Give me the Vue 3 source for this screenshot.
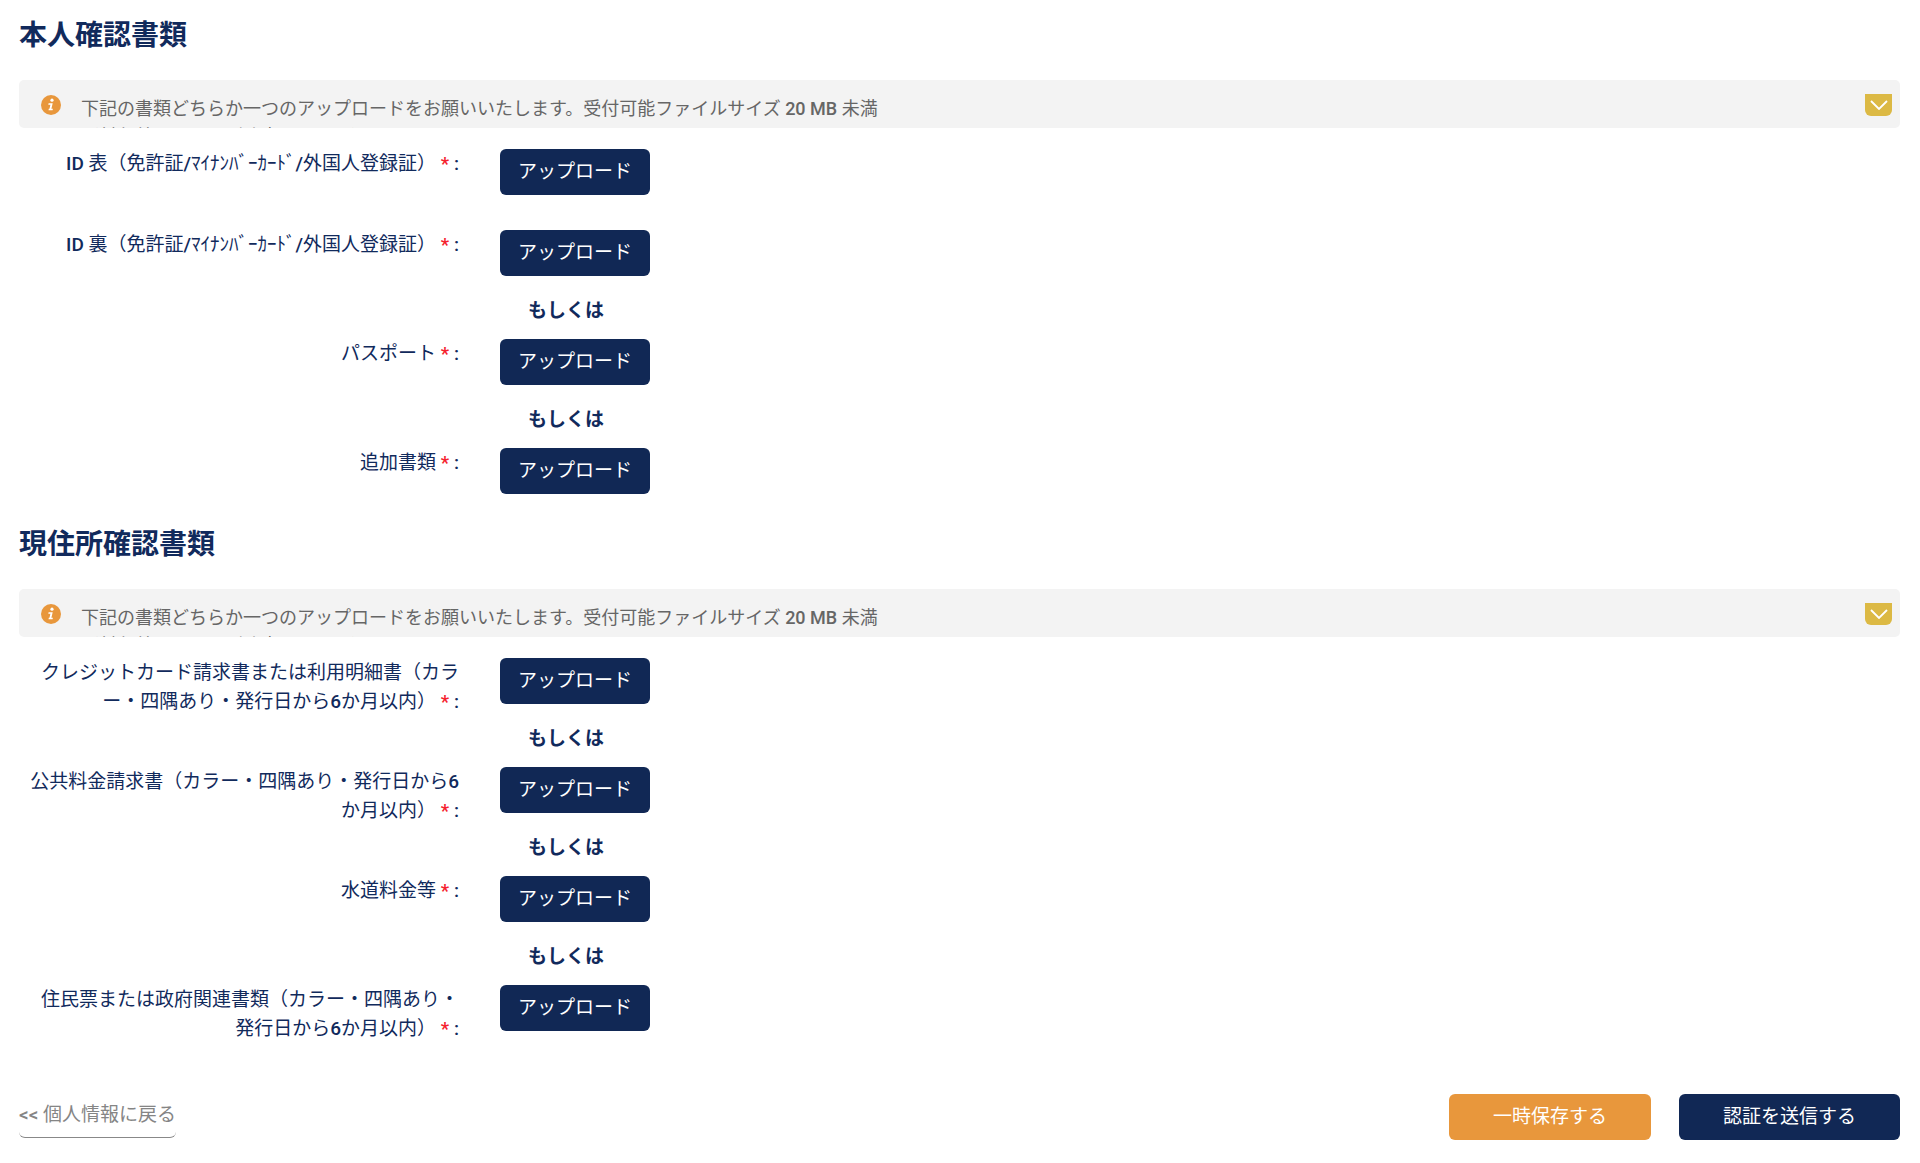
<script setup>
import { ref } from 'vue'

const notice = [
  '下記の書類どちらか一つのアップロードをお願いいたします。受付可能ファイルサイズ 20 MB 未満',
  '（対象外のものはご遠慮ください）'
]

const sections = ref([
  {
    id: 'identity',
    title: '本人確認書類',
    open: false,
    items: [
      { id: 'id-front', label: 'ID 表（免許証/ﾏｲﾅﾝﾊﾞｰｶｰﾄﾞ/外国人登録証）', or: false },
      { id: 'id-back', label: 'ID 裏（免許証/ﾏｲﾅﾝﾊﾞｰｶｰﾄﾞ/外国人登録証）', or: true },
      { id: 'passport', label: 'パスポート', or: true },
      { id: 'extra', label: '追加書類', or: false }
    ]
  },
  {
    id: 'address',
    title: '現住所確認書類',
    open: false,
    items: [
      { id: 'card', label: 'クレジットカード請求書または利用明細書（カラー・四隅あり・発行日から6か月以内）', or: true },
      { id: 'utility', label: '公共料金請求書（カラー・四隅あり・発行日から6か月以内）', or: true },
      { id: 'water', label: '水道料金等', or: true },
      { id: 'resident', label: '住民票または政府関連書類（カラー・四隅あり・発行日から6か月以内）', or: false }
    ]
  }
])
</script>

<template>
  <main class="page" lang="ja">
    <section v-for="section in sections" :key="section.id" class="section">
      <h2 class="title">{{ section.title }}</h2>

      <div class="notice" :class="{ open: section.open }">
        <svg class="info" viewBox="0 0 20 20" aria-hidden="true">
          <circle cx="10" cy="10" r="10" fill="#e8973c" />
          <circle cx="11" cy="5.2" r="1.6" fill="#fff" />
          <path d="M7.6 8.2h4.1l-1.3 5.6h1.5l-.3 1.5H7.5l.3-1.5h.7l.9-4.1H7.3z" fill="#fff" />
        </svg>
        <div class="notice-text">
          <p v-for="line in notice" :key="line">{{ line }}</p>
        </div>
        <button
          type="button"
          class="toggle"
          aria-label="詳細を表示"
          :aria-expanded="section.open"
          @click="section.open = !section.open"
        >
          <svg viewBox="0 0 18 10" aria-hidden="true">
            <path d="M1 1l8 8 8-8" fill="none" stroke="#fff" stroke-width="1.8" />
          </svg>
        </button>
      </div>

      <div class="items">
        <div v-for="item in section.items" :key="item.id" class="item">
          <label class="label" :for="item.id">{{ item.label }} <span class="required">*</span> :</label>
          <div class="field">
            <button :id="item.id" type="button" class="btn upload">アップロード</button>
            <p v-if="item.or" class="or">もしくは</p>
          </div>
        </div>
      </div>
    </section>

    <footer class="footer">
      <a class="back" href="#">&lt;&lt; 個人情報に戻る</a>
      <div class="actions">
        <button type="button" class="btn save">一時保存する</button>
        <button type="button" class="btn submit">認証を送信する</button>
      </div>
    </footer>
  </main>
</template>

<style>
body {
  background: #fff;
}
</style>

<style scoped>
.page {
  box-sizing: border-box;
  padding: 16px 20px 23px 19px;
  font-family: "Roboto Medium", Roboto, "Noto Sans CJK JP", sans-serif;
  font-size: 19px;
  line-height: 29px;
  color: #112a5c;
}

.section + .section {
  margin-top: 31px;
}

.title {
  margin: 0 0 24px;
  font-size: 28px;
  line-height: 40px;
  font-weight: 700;
}

.notice {
  box-sizing: border-box;
  display: flex;
  align-items: flex-start;
  height: 48px;
  padding: 14px 8px 0 22px;
  overflow: hidden;
  border-radius: 5px;
  background: #f3f3f3;
  color: #666;
  font-size: 18px;
  line-height: 28px;
}

.notice.open {
  height: auto;
  padding-bottom: 14px;
}

.info {
  flex: none;
  width: 20px;
  height: 20px;
  margin: 1px 20px 0 0;
}

.notice-text {
  flex: 1;
  padding-top: 1px;
}

.notice-text p {
  margin: 0;
}

.toggle {
  display: flex;
  align-items: center;
  justify-content: center;
  width: 27px;
  height: 22px;
  padding: 0;
  border: 0;
  border-radius: 0 0 6px 6px;
  background: #dcb944;
  cursor: pointer;
}

.toggle svg {
  width: 18px;
  height: 10px;
}

.items {
  margin-top: 21px;
}

.item {
  display: flex;
  align-items: flex-start;
  gap: 41px;
}

.item:has(+ .item):not(:has(.or)) {
  margin-bottom: 35px;
}

.label {
  box-sizing: border-box;
  width: 440px;
  padding-left: 6px;
  text-align: right;
  line-break: loose;
}

.required {
  color: #f5222d;
  font-weight: 700;
}

.btn {
  height: 46px;
  padding: 0 44px 2px;
  border: 0;
  border-radius: 6px;
  background: #112855;
  color: #fff;
  font: inherit;
  cursor: pointer;
}

.upload {
  display: block;
  padding: 0 18px 2px;
}

.or {
  margin: 0;
  padding: 20px 0 14px 28px;
  font-weight: 700;
}

.footer {
  display: flex;
  align-items: flex-start;
  justify-content: space-between;
  margin-top: 51px;
}

.back {
  padding: 6px 0 8px;
  border-bottom: 1px solid #888;
  border-radius: 6px;
  color: #858585;
  text-decoration: none;
}

.actions {
  display: flex;
  gap: 28px;
}

.save {
  background: #e8973c;
}
</style>
